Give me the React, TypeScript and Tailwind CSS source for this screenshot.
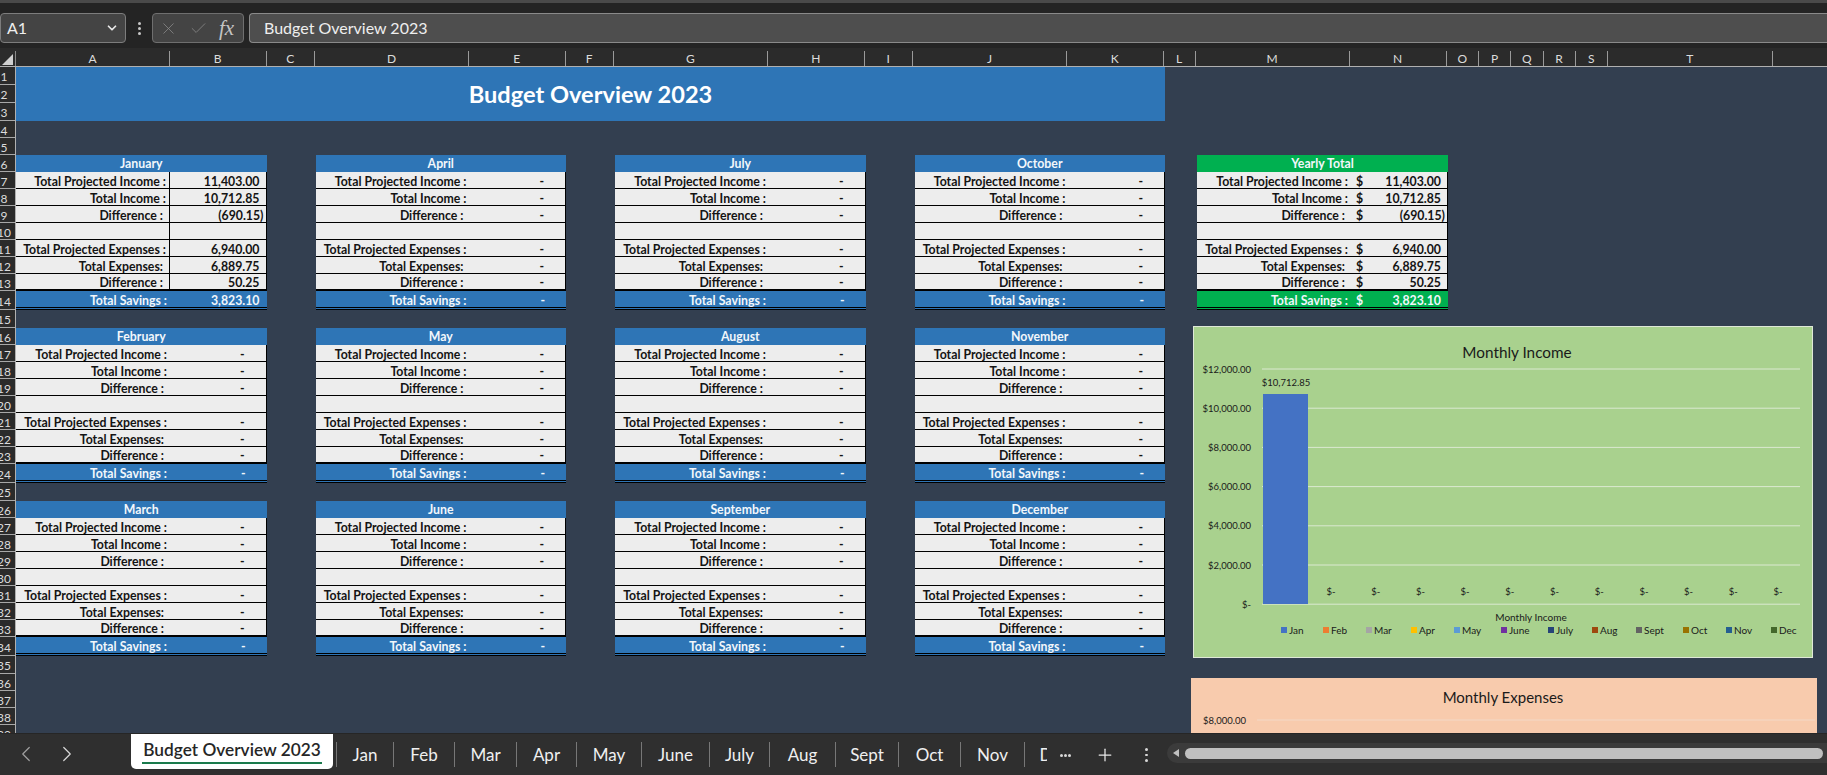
import { Check, ChevronDown, ChevronLeft, ChevronRight, Plus, X } from 'lucide-react';

const font = { fontFamily: 'Lato, "Open Sans", sans-serif' };

const columns: [string, number][] = [
  ['A', 154], ['B', 96.5], ['C', 48.5], ['D', 154], ['E', 96.5], ['F', 48.5],
  ['G', 154], ['H', 96.5], ['I', 48.5], ['J', 154], ['K', 96.5], ['L', 32],
  ['M', 154], ['N', 97], ['O', 32.5], ['P', 32], ['Q', 32.5], ['R', 32], ['S', 32.5], ['T', 164.5], ['', 54],
];

const rowHeights = [18, 18, 18, 17, 17,
  17, 17, 17, 17, 17, 17, 17, 17, 19, 18,
  17, 17, 17, 17, 17, 17, 17, 17, 19, 18,
  17, 17, 17, 17, 17, 17, 17, 17, 19, 18,
  17, 17, 17, 17];

const labels = [
  { text: 'Total Projected Income :', pad: 'pr-[3px]' },
  { text: 'Total Income :', pad: 'pr-[3px]' },
  { text: 'Difference :', pad: 'pr-[6px]' },
  { text: '', pad: '' },
  { text: 'Total Projected Expenses :', pad: 'pr-[3px]' },
  { text: 'Total Expenses:', pad: 'pr-[6px]' },
  { text: 'Difference :', pad: 'pr-[6px]' },
];

const filled = ['11,403.00', '10,712.85', '(690.15)', '', '6,940.00', '6,889.75', '50.25'];
const blank = ['-', '-', '-', '', '-', '-', '-'];

const months = [
  'January', 'April', 'July', 'October',
  'February', 'May', 'August', 'November',
  'March', 'June', 'September', 'December',
];

const Value = ({ text, pad = 'pr-[6px]' }: { text: string; pad?: string }) => {
  if (text === '-') return <span className="pr-[21px]">-</span>;
  if (text.startsWith('(')) return <span className="pr-[2px]">{text}</span>;
  return <span className={pad}>{text}</span>;
};

const BudgetTable = ({ title, values, savings, divider, yearly }: {
  title: string; values: string[]; savings: string; divider?: boolean; yearly?: boolean;
}) => {
  const head = yearly ? 'bg-[#00b050]' : 'bg-[#2e75b6]';
  return (
    <div className="w-full text-[12.3px] font-bold leading-none text-[#141414]" style={font}>
      <div className={`${head} flex h-[17px] items-center justify-center pt-[1px] text-[#f2f7fb]`}>{title}</div>
      {labels.map((l, i) => (
        <div key={i} className={`flex h-[17px] border-r border-black bg-[#ededed] ${i === 6 ? 'border-b-2' : 'border-b'} border-b-black`}>
          <div className={`flex w-[154px] shrink-0 items-center justify-end pt-[4px] ${l.pad} ${divider ? 'border-r border-black' : ''}`}>{l.text}</div>
          {yearly && values[i] && <div className="w-[16px] shrink-0 self-center pl-[5px] pt-[4px]">$</div>}
          <div className="flex flex-1 items-center justify-end pt-[4px]"><Value text={values[i]} /></div>
        </div>
      ))}
      <div className={`${head} flex h-[19px] border-b-[3px] border-double border-black text-[#f2f7fb]`}>
        <div className="flex w-[154px] shrink-0 items-center justify-end pr-[3px] pt-[5px]">Total Savings :</div>
        {yearly && <div className="w-[16px] shrink-0 self-center pl-[5px] pt-[5px]">$</div>}
        <div className="flex flex-1 items-center justify-end pt-[5px]"><Value text={savings} pad="pr-[7px]" /></div>
      </div>
    </div>
  );
};

const legend: [string, string, number][] = [
  ['Jan', '#4472c4', 88], ['Feb', '#ed7d31', 130], ['Mar', '#a5a5a5', 173], ['Apr', '#ffc000', 218],
  ['May', '#5b9bd5', 261], ['June', '#7030a0', 308], ['July', '#264478', 355], ['Aug', '#9e480e', 399],
  ['Sept', '#636363', 443], ['Oct', '#997300', 490], ['Nov', '#255e91', 533], ['Dec', '#43682b', 578],
];

const IncomeChart = () => (
  <div className="h-[332px] w-[620px] border border-[#dfe8d8] bg-[#a9d18e]">
    <svg width="618" height="330" viewBox="1 1 618 330" style={font}>
      <text x="324" y="32" textAnchor="middle" fontSize="15.3" fill="#1a1a1a">Monthly Income</text>
      {[0, 1, 2, 3, 4, 5, 6].map((i) => (
        <g key={i}>
          <line x1="69" x2="607" y1={43 + i * 39.2} y2={43 + i * 39.2} stroke="#dbe9d1" strokeWidth="1" />
          <text x="58" y={46.5 + i * 39.2} textAnchor="end" fontSize="9.5" fill="#1a1a1a">
            {i === 6 ? '$-' : `$${(12 - i * 2).toString()},000.00`}
          </text>
        </g>
      ))}
      <rect x="70" y="68" width="45" height="210" fill="#4472c4" />
      <text x="93" y="60" textAnchor="middle" fontSize="9.5" fill="#1a1a1a">$10,712.85</text>
      {legend.slice(1).map((m, i) => (
        <text key={m[0]} x={138 + i * 44.7} y="269" textAnchor="middle" fontSize="9.5" fill="#1a1a1a">$-</text>
      ))}
      <text x="338" y="295" textAnchor="middle" fontSize="10" fill="#1a1a1a">Monthly Income</text>
      {legend.map(([name, color, x]) => (
        <g key={name}>
          <rect x={x} y="301" width="6" height="6" fill={color} />
          <text x={x + 8} y="308" fontSize="10" fill="#1a1a1a">{name}</text>
        </g>
      ))}
    </svg>
  </div>
);

const ExpensesChart = () => (
  <div className="h-[300px] w-[626px] shrink-0 bg-[#f8cbad]">
    <svg width="626" height="60" style={font}>
      <text x="312" y="25" textAnchor="middle" fontSize="15" fill="#1a1a1a">Monthly Expenses</text>
      <line x1="66" x2="624" y1="42" y2="42" stroke="#f3d9c7" strokeWidth="1" />
      <text x="55" y="46" textAnchor="end" fontSize="9.5" fill="#1a1a1a">$8,000.00</text>
    </svg>
  </div>
);

const FormulaBar = () => (
  <div className="flex h-[48px] shrink-0 flex-col bg-[#242424]">
    <div className="h-[3px] shrink-0 bg-[#4a4a4a]" />
    <div className="flex flex-1 items-start pt-[10px]" style={font}>
      <div className="flex h-[30px] w-[126px] items-center justify-between rounded-[4px] border border-[#7d7d7d] bg-[#444444] pl-[6px] pr-[6px] text-[16px] text-[#eeeeee]">
        A1
        <ChevronDown size={14} strokeWidth={3} className="text-[#e8e8e8]" />
      </div>
      <div className="flex h-[30px] w-[26px] flex-col items-center justify-center gap-[2px]">
        <div className="h-[3px] w-[3px] rounded-full bg-[#c8c8c8]" />
        <div className="h-[3px] w-[3px] rounded-full bg-[#c8c8c8]" />
        <div className="h-[3px] w-[3px] rounded-full bg-[#c8c8c8]" />
      </div>
      <div className="flex h-[30px] w-[92px] items-center gap-[11px] rounded-[4px] border border-[#6f6f6f] bg-[#444444] pl-[6px]">
        <X size={19} strokeWidth={1} className="text-[#8a8a8a]" />
        <Check size={19} strokeWidth={1} className="text-[#8a8a8a]" />
        <span className="text-[21px] italic leading-none text-[#c4c4c4]" style={{ fontFamily: '"Liberation Serif", serif' }}>fx</span>
      </div>
      <div className="ml-[5px] flex h-[30px] flex-1 items-center rounded-l-[4px] border-y border-l border-[#8a8a8a] bg-[#4e4e4e] pl-[14px] text-[16px] text-[#eeeeee]">
        Budget Overview 2023
      </div>
    </div>
  </div>
);

const ColumnHeader = () => (
  <div className="flex h-[16px] shrink-0 border-b border-[#b0b0b0] bg-[#2b2b2b] text-[12px] leading-none text-[#dcdcdc]" style={font}>
    <div className="flex w-[16px] shrink-0 items-end justify-center border-r border-[#8a8a8a] pb-[1px]">
      <svg width="11" height="11" viewBox="0 0 11 11"><path d="M11 0V11H0Z" fill="#d0d0d0" /></svg>
    </div>
    {columns.map(([name, w]) => (
      <div key={name} className={`flex shrink-0 items-center justify-center ${name ? 'border-r border-[#9a9a9a]' : ''}`} style={{ width: w }}>{name}</div>
    ))}
  </div>
);

const RowHeader = () => (
  <div className="w-[16px] shrink-0 overflow-hidden border-r border-[#b0b0b0] bg-[#2b2b2b] text-[12px] leading-none text-[#dcdcdc]" style={font}>
    {rowHeights.map((h, i) => (
      <div key={i} className="flex w-[16px] items-center border-b border-[#a8a8a8] pt-[3px]" style={{ height: h }}>
        <div className="flex w-[8px] justify-center whitespace-nowrap">{i + 1}</div>
      </div>
    ))}
  </div>
);

const tabs: [string, number][] = [
  ['Jan', 57], ['Feb', 61], ['Mar', 62], ['Apr', 60], ['May', 65], ['June', 68],
  ['July', 60], ['Aug', 66], ['Sept', 63], ['Oct', 62], ['Nov', 64], ['Dec', 60],
];

const TabBar = () => (
  <div className="flex h-[42px] shrink-0 items-start border-t border-[#262626] bg-[#2f2f2f] text-[#f0f0f0]" style={font}>
    <div className="flex h-full w-[131px] shrink-0 items-center gap-[15px] pb-[2px] pl-[13px]">
      <ChevronLeft size={26} strokeWidth={1.1} className="text-[#a0a0a0]" />
      <ChevronRight size={26} strokeWidth={1.1} className="text-[#d8d8d8]" />
    </div>
    <div className="flex h-[35px] w-[202px] shrink-0 flex-col items-center rounded-b-[5px] bg-white pt-[6px]">
      <span className="text-[17.3px] font-semibold leading-[20px] text-[#262626]">Budget Overview 2023</span>
      <div className="mt-[2px] h-[2px] w-[180px] bg-[#1a7a4c]" />
    </div>
    <div className="ml-[3px] mt-[8px] flex h-[25px] w-[711px] shrink-0 overflow-hidden border-l border-[#777777]">
      {tabs.map(([name, w]) => (
        <div key={name} className="flex shrink-0 items-center justify-center border-r border-[#777777] text-[17px]" style={{ width: w }}>{name}</div>
      ))}
    </div>
    <div className="mt-[11px] flex w-[120px] shrink-0 items-center pl-[13px]">
      <div className="flex w-[11px] gap-[1px]">
        <div className="h-[3px] w-[3px] rounded-full bg-[#d8d8d8]" />
        <div className="h-[3px] w-[3px] rounded-full bg-[#d8d8d8]" />
        <div className="h-[3px] w-[3px] rounded-full bg-[#d8d8d8]" />
      </div>
      <Plus size={20} strokeWidth={1.5} className="ml-[24px] text-[#e8e8e8]" />
      <div className="ml-[30px] flex flex-col gap-[3px]">
        <div className="h-[2.5px] w-[2.5px] rounded-full bg-[#d8d8d8]" />
        <div className="h-[2.5px] w-[2.5px] rounded-full bg-[#d8d8d8]" />
        <div className="h-[2.5px] w-[2.5px] rounded-full bg-[#d8d8d8]" />
      </div>
    </div>
    <div className="mt-[9px] flex h-[20px] flex-1 items-center rounded-l-[10px] bg-[#3b3b3b] pl-[6px] pr-[4px]">
      <div className="h-0 w-0 border-y-[4px] border-r-[6px] border-y-transparent border-r-[#c0c0c0]" />
      <div className="ml-[6px] h-[11px] flex-1 rounded-full bg-[#c0c0c0]" />
    </div>
  </div>
);

export default function App() {
  return (
    <div className="flex h-[775px] w-[1827px] flex-col overflow-hidden bg-[#333f50]">
      <FormulaBar />
      <div className="h-[3px] shrink-0 bg-[#2b2b2b]" />
      <ColumnHeader />
      <div className="flex min-h-0 flex-1 overflow-hidden">
        <RowHeader />
        <div className="w-[1149px] shrink-0">
          <div className="flex h-[54px] items-center justify-center bg-[#2e75b6] pt-[2px] text-[23.6px] font-bold text-white" style={font}>
            Budget Overview 2023
          </div>
          <div className="mt-[34px] grid grid-cols-[250.5px_250.5px_250.5px_250.5px] gap-x-[49px] gap-y-[18px]">
            {months.map((m) => (
              <BudgetTable
                key={m}
                title={m}
                values={m === 'January' ? filled : blank}
                savings={m === 'January' ? '3,823.10' : '-'}
                divider={m === 'January'}
              />
            ))}
          </div>
        </div>
        <div className="flex min-w-0 flex-1 flex-col pt-[88px]">
          <div className="ml-[32px] w-[251px]">
            <BudgetTable title="Yearly Total" values={filled} savings="3,823.10" yearly />
          </div>
          <div className="ml-[28px] mt-[16px]">
            <IncomeChart />
          </div>
          <div className="ml-[26px] mt-[20px]">
            <ExpensesChart />
          </div>
        </div>
      </div>
      <TabBar />
    </div>
  );
}
